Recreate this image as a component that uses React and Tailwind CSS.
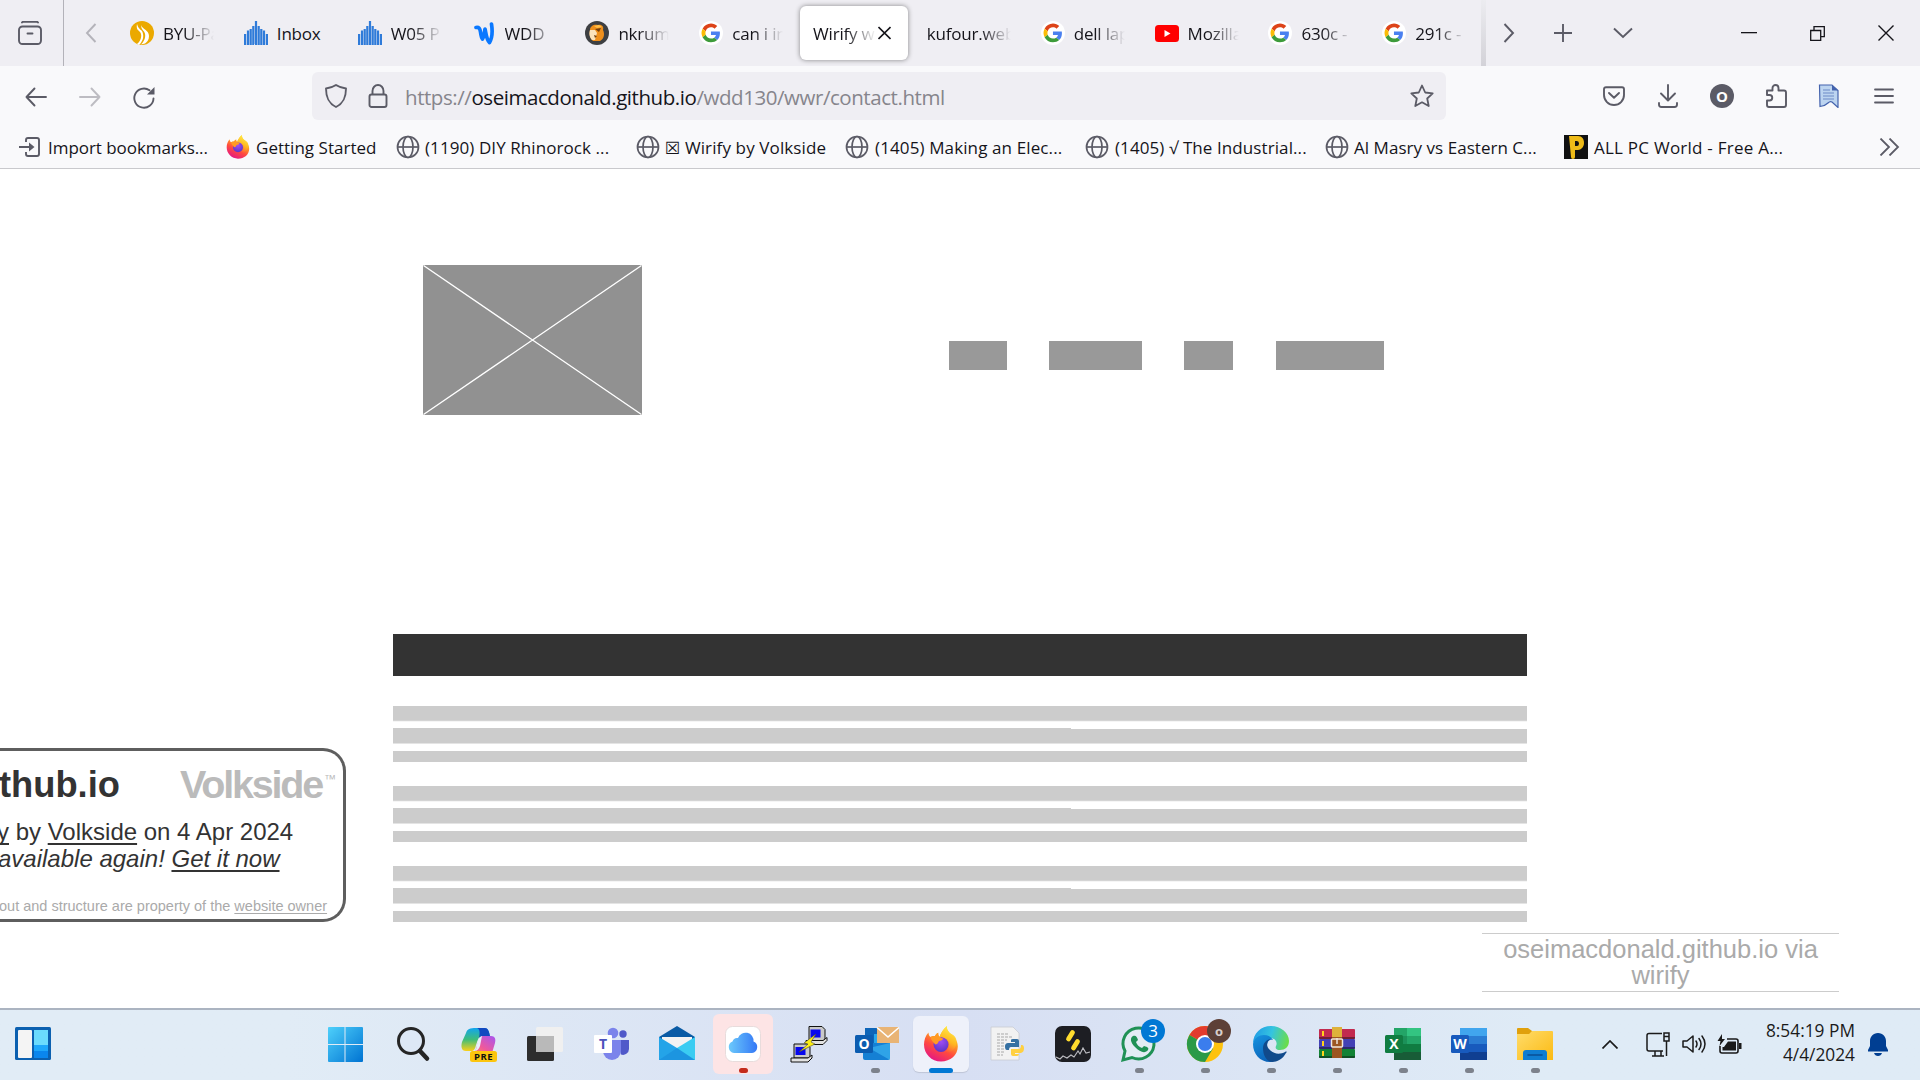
import React from "react";

const Google = () => (
  <svg width="24" height="24" viewBox="0 0 24 24">
    <circle cx="12" cy="12" r="12" fill="#fff" />
    <g transform="translate(2.6 2.6) scale(.39)">
      <path fill="#dd4318" d="M24 9.5c3.54 0 6.7 1.22 9.2 3.6l6.9-6.9C35.9 2.4 30.5 0 24 0 14.6 0 6.5 5.4 2.6 13.2l8 6.2C12.4 13.7 17.7 9.5 24 9.5z" />
      <path fill="#4a80f0" d="M47 24.6c0-1.6-.2-3.1-.4-4.6H24v9h12.9c-.6 3-2.2 5.500-4.700 7.200l7.700 6C44.400 38 47 32 47 24.600z" />
      <path fill="#fbbc05" d="M10.500 28.600a14.500 14.500 0 0 1 0-9.200l-8-6.200a24 24 0 0 0 0 21.600z" />
      <path fill="#3d9b3a" d="M24 48c6.500 0 11.900-2.100 15.900-5.800l-7.700-6c-2.200 1.500-4.900 2.300-8.200 2.300-6.300 0-11.600-4.200-13.500-9.900l-8 6.200C6.500 42.600 14.600 48 24 48z" />
    </g>
  </svg>
);
const Canvas = () => (
  <svg width="24" height="24" viewBox="0 0 24 24" fill="#2f7bd9">
    <path d="M0 13h2.200v11H0zM2.900 9.500h2.200V24H2.900zM5.600 8h2.200v16H5.600zM8.200 5h2.200v19H8.200zM10.900 0h2.200v24h-2.200zM13.600 5h2.200v19h-2.200zM16.200 8h2.200v16h-2.200zM18.900 9.500h2.200V24h-2.200zM21.800 13H24v11h-2.200z" />
  </svg>
);
const Byu = () => (
  <svg width="24" height="24" viewBox="0 0 24 24">
    <circle cx="12" cy="12" r="12" fill="#eba900" />
    <path d="M7 3c-1 5 1 6 3 8s2 8-3 12l2 1c5-5 5-10 3-14-2-2-4-3-5-7z" fill="#fff" />
    <path d="M11 4c1 4 8 5 8 11 0 4-2 6-4 7.500l-4 1c5-5 5-10 3-13-2-2-3-4-3-6.500z" fill="#fff" />
  </svg>
);
const Wave = () => (
  <svg width="20" height="24" viewBox="0 0 20 24" fill="none" stroke="#0a78ff" strokeLinecap="round" strokeLinejoin="round">
    <path d="M2 6.500c3-.5 4 1 4.500 4.500.4 3 .8 6 2 7 1.500-2 1.800-6 2.500-10 1 4 1.500 11 4.500 13.500 2.500-4 3-12 2-18.500" strokeWidth="3.700" />
  </svg>
);
const Lion = () => (
  <svg width="24" height="24" viewBox="0 0 24 24">
    <circle cx="12" cy="12" r="12" fill="#3d3f42" />
    <path d="M5 9c0-4 4-6 8-5 4-1 6 2 5 5 2 4 1 9-3 11H8c-3-2-4-7-3-11z" fill="#ee8f1c" />
    <path d="M5 9h5l2 3-2 7H7c-3-3-3-7-2-10z" fill="#fbe3bd" />
    <path d="M10 8l6-1-2 4zM9 14l3 1-2 2z" fill="#74400f" />
    <path d="M9 5l5-1 3 2-5 1z" fill="#ffc04a" />
  </svg>
);
const YouTube = () => (
  <svg width="24" height="24" viewBox="0 0 24 24">
    <rect y="4" width="24" height="17" rx="3.500" fill="#f00" />
    <path d="M9.500 9v7l6-3.500z" fill="#fff" />
  </svg>
);
const FirefoxLogo = ({ size, id }) => (
  <svg width={size} height={size} viewBox="0 0 36 36">
    <defs>
      <linearGradient id={id + "a"} x1=".8" y1="0" x2=".3" y2="1">
        <stop offset="0" stopColor="#fff44f" />
        <stop offset=".35" stopColor="#ffa91f" />
        <stop offset=".65" stopColor="#ff4a3f" />
        <stop offset="1" stopColor="#e31587" />
      </linearGradient>
      <radialGradient id={id + "b"} cx=".5" cy=".3" r=".7">
        <stop offset="0" stopColor="#a14df5" />
        <stop offset="1" stopColor="#5b35c6" />
      </radialGradient>
      <linearGradient id={id + "c"} x1=".8" y1="0" x2=".5" y2="1">
        <stop offset="0" stopColor="#fff44f" />
        <stop offset=".6" stopColor="#ffb91f" stopOpacity=".9" />
        <stop offset="1" stopColor="#ff7a30" stopOpacity="0" />
      </linearGradient>
    </defs>
    <path d="M5.500 6.500c0 2 .8 3.500 2 4.500 1.500-1 3-1.200 4.500-1 .7-1.500 1.800-2.600 3.300-3.200-.4 1.800.1 3.200 1.200 4.200 1.500-4 3.500-8 7.500-11-.5 4 2 6 4.500 8.500 3.500 3.300 6.300 6.500 6.300 12C34.800 29 27.500 35.500 18 35.500S1 28 1 18.500c0-4.500 1.500-9 4.500-12z" fill={`url(#${id}a)`} />
    <circle cx="18" cy="18.500" r="7.500" fill={`url(#${id}b)`} />
    <path d="M24 0c-4 3-6 7-7.500 11 4 0 8 1.500 9.500 5 1.500 5-1.500 9.500-6.500 10.500 6 2 14-2 14-11 0-3.500-2-6-5-7.500S23.500 4 24 0z" fill={`url(#${id}c)`} />
    <path d="M7.500 11c1.500-1 3-1.200 4.500-1 .7-1.500 1.800-2.600 3.300-3.200-.4 2 .6 4.500 4.700 5.700 0 1.500-2 2.500-4 2.500-1 1.500-1 3-3.500 3.500-1.500-1.500-4.500-4-5-7.500z" fill="#ff9a24" />
  </svg>
);

const tabs = [
  { icon: <Byu />, text: "BYU-Pa", fade: true },
  { icon: <Canvas />, text: "Inbox" },
  { icon: <Canvas />, text: "W05 P", fade: true },
  { icon: <Wave />, text: "WDD", fade: true },
  { icon: <Lion />, text: "nkrum", fade: true },
  { icon: <Google />, text: "can i in", fade: true },
  { active: true, text: "Wirify w" },
  { text: "kufour.web", fade: true },
  { icon: <Google />, text: "dell lap", fade: true },
  { icon: <YouTube />, text: "Mozilla", fade: true },
  { icon: <Google />, text: "630c -", fade: true },
  { icon: <Google />, text: "291c -", fade: true },
];

const fadeMask = "[mask-image:linear-gradient(to_left,transparent_0px,black_30px)]";

function Tab({ icon, text, active, fade }) {
  if (active)
    return (
      <div className="flex h-[66px] w-[114.2px] items-center pl-[2px]">
        <div className="flex h-[54px] w-[108px] items-center rounded-md bg-white pl-[13px] shadow-[0_0_5px_rgba(0,0,0,0.45)]">
          <span className={"w-[63px] overflow-hidden whitespace-nowrap pt-px text-[17px] tracking-[-0.2px] " + fadeMask}>{text}</span>
          <svg className="ml-[2px]" width="13" height="14" viewBox="0 0 13 14" fill="none" stroke="#15141a" strokeWidth="1.600">
            <path d="M.5 1l12 12M12.500 1l-12 12" />
          </svg>
        </div>
      </div>
    );
  return (
    <div className="flex h-[66px] w-[114.2px] items-center pl-[15px]">
      {icon && <div className="mr-[9px] flex w-6 shrink-0 justify-center">{icon}</div>}
      <span className={"overflow-hidden whitespace-nowrap pt-px text-[17px] tracking-[-0.2px] " + (icon ? "w-[51px] " : "w-[84px] ") + (fade ? fadeMask : "")}>{text}</span>
    </div>
  );
}

const Globe = () => (
  <svg width="24" height="24" viewBox="0 0 24 24" fill="none" stroke="#5b5b66" strokeWidth="1.700">
    <circle cx="12" cy="12" r="10.500" />
    <ellipse cx="12" cy="12" rx="5" ry="10.500" />
    <path d="M2 12h20" />
  </svg>
);
const ImportIcon = () => (
  <svg width="24" height="24" viewBox="0 0 24 24" fill="none" stroke="#5b5b66" strokeWidth="1.900">
    <path d="M7 7V5q0-2 2-2h9q2 0 2 2v14q0 2-2 2H9q-2 0-2-2v-2M0 12h13" />
    <path d="M10 7.500l5.500 4.500-5.500 4.500z" fill="#5b5b66" stroke="none" />
  </svg>
);
const PIcon = () => (
  <div className="flex h-6 w-6 items-center justify-center bg-[#111]">
    <svg width="18" height="24" viewBox="0 0 18 24">
      <path fillRule="evenodd" d="M2 1h9c4 0 6 3 6 7s-3 7-6 7H8v7q0 2-2 2t-2-2zM8 6v5h2q2 0 2-2.500T10 6z" fill="#eebb18" />
    </svg>
  </div>
);
const bookmarks = [
  { cell: "w-[207px]", icon: <ImportIcon />, text: "Import bookmarks...", sp: "-ml-px tracking-[-0.05px]" },
  { cell: "w-[170px]", icon: <FirefoxLogo size={24} id="bk" />, text: "Getting Started", sp: "tracking-[0.02px]" },
  { cell: "w-[240px]", icon: <Globe />, text: "(1190) DIY Rhinorock ...", sp: "-ml-px tracking-[0.08px]" },
  { cell: "w-[209px]", icon: <Globe />, text: "☒ Wirify by Volkside", sp: "-ml-px tracking-[0.12px]" },
  { cell: "w-[240px]", icon: <Globe />, text: "(1405) Making an Elec...", sp: "tracking-[0.12px]" },
  { cell: "w-[240px]", icon: <Globe />, text: "(1405) √ The Industrial...", sp: "tracking-[0.09px]" },
  { cell: "w-[239px]", icon: <Globe />, text: "Al Masry vs Eastern C...", sp: "-ml-px tracking-[0.04px]" },
  { cell: "w-[240px]", icon: <PIcon />, text: "ALL PC World - Free A...", sp: "tracking-[0.24px]" },
];

function Browser() {
  return (
    <header className="text-[#15141a]">
      <div className="flex h-[66px] items-center bg-[#efeef3]">
        <div className="flex h-full w-16 items-center justify-center border-r border-[#b3b2b9] pr-[4px]">
          <svg width="24" height="24" viewBox="0 0 24 24" fill="none" stroke="#5b5b66" strokeWidth="1.900" strokeLinecap="round">
            <path d="M4 1.500q.5-.8 1.500-.8h13q1 0 1.500.8M9.500 12.500h5" />
            <rect x="1" y="5.500" width="22" height="17.500" rx="3.500" />
          </svg>
        </div>
        <div className="flex w-[51px] justify-center pl-[3px]">
          <svg width="12" height="20" viewBox="0 0 12 20" fill="none" stroke="#b4b3ba" strokeWidth="1.900"><path d="M10.500 1L2 10l8.500 9" /></svg>
        </div>
        <div className="flex w-[1366px]">{tabs.map((t, i) => <Tab key={i} {...t} />)}</div>
        <div className="h-full w-[5px] bg-linear-to-b from-[#ececf0] to-[#d3d2d8]" />
        <div className="flex flex-1 items-center text-[#5b5b66]">
          <svg className="ml-[17px]" width="12" height="20" viewBox="0 0 12 20" fill="none" stroke="currentColor" strokeWidth="1.900"><path d="M1.500 1L10 10l-8.500 9" /></svg>
          <svg className="ml-[39px]" width="18" height="18" viewBox="0 0 18 18" fill="none" stroke="currentColor" strokeWidth="1.900"><path d="M9 0v18M0 9h18" /></svg>
          <svg className="ml-[41px]" width="20" height="12" viewBox="0 0 20 12" fill="none" stroke="currentColor" strokeWidth="1.900"><path d="M1 1.500l9 8.500 9-8.500" /></svg>
          <svg className="ml-[108px]" width="16" height="2" viewBox="0 0 16 2"><path d="M0 0h16v1.300H0z" fill="#15141a" /></svg>
          <svg className="ml-[53px]" width="15" height="15" viewBox="0 0 15 15" fill="none" stroke="#15141a" strokeWidth="1.300"><path d="M.7 4.500h10v10h-10zM4 4V.7h10.300v10h-3.500" /></svg>
          <svg className="ml-[53px]" width="16" height="16" viewBox="0 0 16 16" fill="none" stroke="#15141a" strokeWidth="1.400"><path d="M.5.5l15 15M15.500.5l-15 15" /></svg>
        </div>
      </div>
      <div className="flex h-[60px] items-center bg-[#f9f9fb] text-[#5b5b66]">
        <svg className="ml-[25px] mt-px" width="22" height="20" viewBox="0 0 22 20" fill="none" stroke="currentColor" strokeWidth="1.900" strokeLinecap="round" strokeLinejoin="round"><path d="M21 10H1.500M9.500 1.500L1.500 10l8 8.500" /></svg>
        <svg className="ml-[32px] mt-px text-[#bdbcc2]" width="22" height="20" viewBox="0 0 22 20" fill="none" stroke="currentColor" strokeWidth="1.900" strokeLinecap="round" strokeLinejoin="round"><path d="M1 10h19.500M12.500 1.500l8 8.500-8 8.500" /></svg>
        <svg className="ml-[32px] mt-[2px]" width="23" height="23" viewBox="0 0 23 23" fill="none" stroke="currentColor" strokeWidth="1.900" strokeLinecap="round">
          <path d="M20.500 12.500A9.600 9.600 0 1 1 16.500 4.300" />
          <path d="M21.500 1v7.500h-7.500z" fill="currentColor" stroke="none" />
        </svg>
        <div className="ml-[156px] flex h-12 w-[1134px] items-center rounded-md bg-[#efeef3]">
          <svg className="ml-[12px]" width="24" height="24" viewBox="0 0 24 24" fill="none" stroke="currentColor" strokeWidth="1.900" strokeLinejoin="round"><path d="M12 1c3 2 6 3 10 3.500C22 13 20 19 12 23 4 19 2 13 2 4.500 6 4 9 3 12 1z" /></svg>
          <svg className="ml-[20px]" width="20" height="24" viewBox="0 0 20 24" fill="none" stroke="currentColor" strokeWidth="1.900"><rect x="1.500" y="10.500" width="17" height="12.500" rx="2" /><path d="M4.500 10V7a5.500 6 0 0 1 11 0v3" /></svg>
          <span className="ml-[17px] w-[1000px] pt-[2px] text-[20.5px] tracking-[-0.44px] text-[#86858c]">https://<span className="text-[#15141a]">oseimacdonald.github.io</span>/wdd130/wwr/contact.html</span>
          <svg className="ml-auto mr-[12px] shrink-0" width="24" height="24" viewBox="0 0 24 24" fill="none" stroke="currentColor" strokeWidth="1.800" strokeLinejoin="round"><path d="M12 1.500l3.200 7 7.500.9-5.500 5.100 1.500 7.500L12 18.300 5.300 22l1.500-7.500-5.500-5.100 7.500-.9z" /></svg>
        </div>
        <div className="flex flex-1 items-center pl-[157px]">
          <svg width="22" height="20" viewBox="0 0 22 20" fill="none" stroke="currentColor" strokeWidth="1.900" strokeLinecap="round" strokeLinejoin="round"><path d="M3 1.200h16q2 0 2 2V9a10 10 0 0 1-20 0V3.200q0-2 2-2zM6 7l5 4.800L16 7" /></svg>
          <svg className="ml-[33px]" width="20" height="24" viewBox="0 0 20 24" fill="none" stroke="currentColor" strokeWidth="1.900" strokeLinecap="round" strokeLinejoin="round"><path d="M10 1v15M3 9.500l7 7 7-7M1 19v1.500Q1 23 3.500 23h13q2.500 0 2.500-2.500V19" /></svg>
          <div className="ml-[32px] flex h-6 w-6 items-center justify-center rounded-full bg-[#5b5b66] text-[15px] font-bold text-white">O</div>
          <svg className="ml-[31px]" width="22" height="24" viewBox="0 0 22 24" fill="none" stroke="currentColor" strokeWidth="1.900" strokeLinejoin="round"><path d="M7.500 6.500V4a3 3 0 0 1 6 0v2.500H19q2 0 2 2V21q0 2-2 2H4q-2 0-2-2v-4.500h2.500a2.700 2.700 0 0 0 0-5.500H2V6.500z" /></svg>
          <svg className="ml-[31px]" width="22" height="24" viewBox="0 0 22 24"><path d="M1.500 1H14l6 5.500v17L14 18q-2-1-4 1-3 3-8 3.500z" fill="#bcd4f0" stroke="#4463ad" strokeWidth="1.200" /><path d="M5 6h7M5 9h11M5 12h11M5 15h11" stroke="#6d8ac6" strokeWidth="1.100" /><path d="M14 1v5.500h6z" fill="#4463ad" /></svg>
          <svg className="ml-[34px]" width="20" height="16" viewBox="0 0 20 16" fill="none" stroke="currentColor" strokeWidth="1.800" strokeLinecap="round"><path d="M1 1.500h18M1 8h18M1 14.500h18" /></svg>
        </div>
      </div>
      <div className="flex h-[43px] items-center border-b border-[#c9c9cd] bg-[#f9f9fb] pl-[19px] text-[17px]">
        {bookmarks.map((b, i) => (
          <div key={i} className={"flex shrink-0 items-center gap-[6px] whitespace-nowrap " + b.cell}>
            <div className="h-6 w-6 shrink-0">{b.icon}</div>
            <span className={"pt-[2px] " + b.sp}>{b.text}</span>
          </div>
        ))}
        <svg className="ml-auto mr-[20px]" width="21" height="18" viewBox="0 0 21 18" fill="none" stroke="#5b5b66" strokeWidth="1.800"><path d="M1.500.5L10 9l-8.500 8.500M10.500.5L19 9l-8.500 8.500" /></svg>
      </div>
    </header>
  );
}

function Paragraph() {
  return (
    <div className="flex h-20 flex-col">
      <div className="h-[14px] bg-[#ccc]" />
      <div className="h-px bg-[#d4d4d4]" />
      <div className="h-px bg-[#f5f5f5]" />
      <div className="mt-[6px] flex h-[15px] items-end">
        <div className="h-[15px] w-[678px] bg-[#ccc]" />
        <div className="h-[14px] flex-1 bg-[#ccc]" />
      </div>
      <div className="h-px bg-[#e4e4e4]" />
      <div className="mt-[7px] h-[11px] bg-[#ccc]" />
    </div>
  );
}

function Page() {
  return (
    <main className="relative h-[839px] overflow-hidden bg-white">
      <div className="mx-auto w-[1134px] pt-24">
        <div className="flex h-[150px] pl-[30px]">
          <svg width="219" height="150" viewBox="0 0 219 150"><rect width="219" height="150" fill="#919191" /><path d="M.5.5l218 149M218.500.5L.5 149.500" stroke="#fff" strokeWidth="1.300" /></svg>
          <nav className="ml-[307px] mt-[76px] flex h-[29px]">
            <div className="w-[58px] bg-[#999]" />
            <div className="ml-[42px] w-[93px] bg-[#999]" />
            <div className="ml-[42px] w-[49px] bg-[#999]" />
            <div className="ml-[43px] w-[108px] bg-[#999]" />
          </nav>
        </div>
        <div className="mt-[219px] h-[42px] bg-[#333]" />
        <div className="mt-[30px]">
          <Paragraph />
          <Paragraph />
          <Paragraph />
        </div>
      </div>

      <aside className="absolute left-0 top-[579px] h-[174px] w-[346px] rounded-r-[23px] border-y-[3px] border-r-[3px] border-[#5e5e5e] bg-white font-['Liberation_Sans',sans-serif] text-[#333]">
        <div className="flex h-[67px] items-start justify-between pr-[7px] pt-[12px]">
          <span className="-ml-px text-[36.3px] font-bold leading-[44px]">thub.io</span>
          <div className="flex items-start text-[#bbb]">
            <span className="text-[39.5px] font-bold leading-[42px] tracking-[-2.2px]">Volkside</span>
            <span className="mt-[10px] ml-[2px] text-[12px] leading-[12px]">™</span>
          </div>
        </div>
        <div className="whitespace-nowrap text-[24px] leading-[27px]">
          <p className="-ml-[3px]"><span className="underline decoration-2 underline-offset-[3px] [text-decoration-skip-ink:none]">y</span> by <span className="underline decoration-2 underline-offset-[3px] [text-decoration-skip-ink:none]">Volkside</span> on 4 Apr 2024</p>
          <p className="-ml-[2px] italic">available again! <span className="underline decoration-2 underline-offset-[3px] [text-decoration-skip-ink:none]">Get it now</span></p>
        </div>
        <p className="mt-[24px] -ml-px whitespace-nowrap text-[14.5px] leading-[20px] text-[#aaa]">out and structure are property of the <span className="underline decoration-1 underline-offset-[2px] [text-decoration-skip-ink:none]">website owner</span></p>
      </aside>

      <aside className="absolute left-[1482px] top-[764px] h-[59px] w-[357px] border-y border-[#ccc] bg-white pt-[2px] text-center font-['Liberation_Sans',sans-serif] text-[25.5px] leading-[26px] text-[#aaa]">
        oseimacdonald.github.io via
        <br />
        wirify
      </aside>
    </main>
  );
}

const Office = ({ letter, c, sq }) => (
  <svg width="36" height="36" viewBox="0 0 36 36" className="overflow-visible">
    <rect x="9" y="2" width="27" height="8" fill={c[0]} />
    <rect x="9" y="10" width="27" height="8" fill={c[1]} />
    <rect x="9" y="18" width="27" height="8" fill={c[2]} />
    <rect x="9" y="26" width="27" height="8" fill={c[3]} />
    {c[4] && <path d="M22 2h14v8H22z" fill={c[4]} />}
    {c[4] && <path d="M22 10h14v8H22z" fill={c[0]} />}
    <rect y="9" width="18" height="18" rx="1.500" fill={sq} />
    <text x="9" y="23" textAnchor="middle" fontSize="14" fontWeight="700" fill="#fff">{letter}</text>
  </svg>
);

const S = ({ children }) => <svg width="36" height="36" viewBox="0 0 36 36" className="overflow-visible">{children}</svg>;
const Computer = () => (
  <>
    <path d="M3 0h13l3 3v11H3z" fill="#c9c9c9" stroke="#111" />
    <rect x="4.500" y="3" width="10" height="8" fill="#0707ee" />
    <path d="M0 14h17l4-3v3l-4 4H0z" fill="#e2e2e2" stroke="#111" />
  </>
);

const apps = [
  {
    icon: (
      <S>
        <defs><linearGradient id="win" x1="0" y1="0" x2="1" y2="1"><stop offset="0" stopColor="#4ed0fb" /><stop offset="1" stopColor="#0073d2" /></linearGradient></defs>
        <path transform="translate(-2 0)" d="M2 1h15.500v17H1V2q0-1 1-1zM18.500 1H35q1 0 1 1v16H18.500zM1 19h16.500v17H2q-1 0-1-1zM18.500 19H36v16q0 1-1 1H18.500z" fill="url(#win)" />
      </S>
    ),
  },
  { icon: <S><circle cx="16" cy="15" r="12.500" fill="#dde8f6" stroke="#252525" strokeWidth="3" /><path d="M25 25l7 7.500" stroke="#252525" strokeWidth="4.500" strokeLinecap="round" /></S> },
  {
    icon: (
      <S>
        <defs>
          <linearGradient id="cpa" x1="0" y1="0" x2="0" y2="1"><stop offset="0" stopColor="#12a5ef" /><stop offset=".5" stopColor="#3ebd7a" /><stop offset="1" stopColor="#fbd018" /></linearGradient>
          <linearGradient id="cpb" x1="1" y1="0" x2="0" y2="1"><stop offset="0" stopColor="#a555f2" /><stop offset=".6" stopColor="#f0599a" /><stop offset="1" stopColor="#ff9a4d" /></linearGradient>
        </defs>
        <path d="M15 2h8c4 0 5 3 6 8h-7c-5 0-5 4-7 9-1 4-2 6-5 6H5c-5 0-5-5-4-9L5 7c1-4 4-5 10-5z" fill="url(#cpa)" />
        <path d="M16 2h8c3 0 4 3 5 8h-7c-2 0-3 1-4 2 1-5 1-9-2-10z" fill="#1149c0" />
        <path d="M22 10h8c4 0 5 3 4 7l-3 10H9c5 0 6-3 7-7 2-6 2-10 6-10z" fill="url(#cpb)" />
        <path d="M21 10q-4 1-5 9t-4 6q5 1 7-5z" fill="#e9effb" />
        <rect x="9" y="25" width="27" height="11" rx="2.500" fill="#fcc50e" />
        <text x="22.500" y="33.800" textAnchor="middle" fontSize="9.500" fontWeight="700" letterSpacing=".4" fill="#111">PRE</text>
      </S>
    ),
  },
  { icon: <S><rect x="0" y="10" width="27" height="25" rx="1.500" fill="#2d2d2d" /><rect x="9" y="1" width="27" height="25" rx="1.500" fill="#f0f0f0" /><path d="M9 10h18v16H9z" fill="#b9b9b9" /></S> },
  {
    icon: (
      <S>
        <circle cx="30" cy="8" r="3.700" fill="#5059c9" />
        <path d="M25 14h11v9a6 6 0 0 1-8 5.500z" fill="#5059c9" />
        <circle cx="20" cy="7" r="5.300" fill="#7b83eb" />
        <path d="M10 14h18v11a9 9 0 0 1-18 0z" fill="#7b83eb" />
        <rect x="1" y="9" width="18" height="18" rx="1" fill="#fff" />
        <text x="10" y="23" textAnchor="middle" fontSize="14" fontWeight="700" fill="#4b53bc">T</text>
      </S>
    ),
  },
  {
    icon: (
      <S>
        <path d="M0 11L18 0l18 11v6H0z" fill="#0a5ba5" />
        <path d="M3 11h30v4L18 26 3 15z" fill="#f3f3f3" />
        <path d="M0 11l18 11v12H0z" fill="#24a4e8" />
        <path d="M36 11L18 22v12h18z" fill="#3accf2" />
        <path d="M0 34l18-12 18 12z" fill="#1c95e0" />
      </S>
    ),
  },
  {
    box: "bg-[#fde4e5]", dot: "w-[9px] bg-[#c42b1c]",
    icon: (
      <S>
        <defs><linearGradient id="cl" x1="0" x2="1"><stop offset="0" stopColor="#6bc9fb" /><stop offset="1" stopColor="#3478f6" /></linearGradient></defs>
        <rect x=".5" y=".5" width="35" height="35" rx="7" fill="#fff" stroke="#e8dcdc" />
        <path d="M9 27a6 6 0 0 1-1.500-11.500A5 5 0 0 1 13 12a8 8 0 0 1 15.500 3.500A6 6 0 0 1 27 27z" fill="url(#cl)" />
      </S>
    ),
  },
  {
    icon: (
      <S>
        <g transform="translate(15 .5)"><Computer /></g>
        <g transform="translate(0 18)"><Computer /></g>
        <path d="M25 8L13 17l4 1-9 8 16-8-4-2z" fill="#fdee12" stroke="#444" strokeWidth=".6" />
      </S>
    ),
  },
  {
    dot: "w-[9px] bg-[#7d828c]",
    icon: (
      <S>
        <path d="M8 2h22v16H8z" fill="#0e65b8" /><path d="M17 8h9v9h-9z" fill="#29a8ea" />
        <path d="M6 17h27v15q0 2-2 2H8q-2 0-2-2z" fill="#1580d4" /><path d="M33 17v17L12 22z" fill="#3ab2ef" opacity=".7" />
        <rect x="-2" y="9" width="18" height="18" rx="1.500" fill="#0b5cb0" />
        <text x="7" y="23" textAnchor="middle" fontSize="14" fontWeight="700" fill="#fff">O</text>
        <path d="M20 1h22v16H20z" fill="#e9b475" /><path d="M20 1.500l11 9.500 11-9.500" fill="none" stroke="#fff" strokeWidth="1.600" />
      </S>
    ),
  },
  { box: "bg-[#eef1fa] shadow-[0_1px_1px_rgba(0,0,0,0.12)] !w-14 !h-14", dot: "w-[24px] bg-[#0078d4]", icon: <FirefoxLogo size={36} id="tb" /> },
  {
    icon: (
      <S>
        <path d="M2 1h22l6 6v27H2z" fill="#f2f2f2" stroke="#c9ccd2" strokeWidth=".8" />
        <path d="M8 8h12M8 11h16M8 14h10M8 17h8M8 20h9M8 23h7M8 26h8M8 29h6" stroke="#a9a9a9" strokeDasharray="3 1" />
        <path d="M24 13h4q2 0 2 2v6h-8q-2 0-2 3h-2q-2 0-2-3.500T19 17h7v-1h-4v-2q0-1 2-1z" fill="#3570a2" />
        <path d="M28 30h-4q-2 0-2-2v-5h8q2 0 2-4h1q2 0 2 3.500T32 27h-6v1h4q0 2-2 2z" fill="#ffd040" />
      </S>
    ),
  },
  {
    icon: (
      <S>
        <rect width="36" height="36" rx="7" fill="#1d1e23" />
        <path d="M17.500 6.500L13.500 13M22.500 15.500l-4 6.500" stroke="#ffdc2e" strokeWidth="4.800" strokeLinecap="round" />
        <path d="M1 31l4 2 3-3 4 2 4-3 3 2 4-6 2 3 3-6 3 5 4-1" fill="none" stroke="#bdbdc2" strokeWidth="1.100" />
      </S>
    ),
  },
  {
    dot: "w-[9px] bg-[#7d828c]",
    icon: (
      <S>
        <path d="M2 34l2-9a15.500 15.500 0 1 1 7 6.500z" fill="#e2ecf4" stroke="#1f9155" strokeWidth="3" />
        <path d="M12 10c-3 2-3 6 2 11s10 7 13 3c1-2 0-3-4-4l-2 2c-3-1-5-3-6-6l2-2c-1-3-2-5-5-4z" fill="#1f9155" />
        <circle cx="32" cy="5" r="12" fill="#0078d4" />
        <text x="32" y="11" textAnchor="middle" fontSize="17" fill="#fff">3</text>
      </S>
    ),
  },
  {
    dot: "w-[9px] bg-[#7d828c]",
    icon: (
      <S>
        <circle cx="18" cy="18" r="18" fill="#fdc20e" />
        <path d="M18 18L2.400 9A18 18 0 0 1 33.600 9z" fill="#e33b2e" />
        <path d="M18 36A18 18 0 0 1 2.400 9L18 18l8 4.500z" fill="#2b9a48" />
        <circle cx="18" cy="18" r="9" fill="#fff" /><circle cx="18" cy="18" r="7" fill="#3b7ded" />
        <circle cx="32" cy="5" r="12" fill="#5d4037" />
        <text x="32" y="9.500" textAnchor="middle" fontSize="13" fontWeight="700" fill="#d8cfcb">o</text>
      </S>
    ),
  },
  {
    dot: "w-[9px] bg-[#7d828c]",
    icon: (
      <S>
        <defs>
          <linearGradient id="eg" x1="0" y1=".3" x2="1" y2=".5"><stop offset="0" stopColor="#1f9be5" /><stop offset=".5" stopColor="#35c4e0" /><stop offset="1" stopColor="#6add4a" /></linearGradient>
          <linearGradient id="eb" x1="0" y1="0" x2=".5" y2="1"><stop offset="0" stopColor="#1794e0" /><stop offset="1" stopColor="#0b62b8" /></linearGradient>
        </defs>
        <path d="M0 18C0 7 8 0 18 0s18 7 18 15c0 6-4 9-9 9-4 0-5-2-4-4 2-4-1-8-6-8C9 9 2 12 0 18z" fill="url(#eg)" />
        <path d="M0 18c1-6 6-9 11-9 5 0 8 3 9 5-4-1-6 2-6 6 0 6 5 12 12 12-3 3-7 4-9 4C7 36 0 28 0 18z" fill="url(#eb)" />
        <path d="M10 22c0-5 4-9 8-9-5 2-5 8-1 11 5 5 11 4 15 2 2-1 2 0 1 1-3 6-9 9-14 9-6-1-9-7-9-14z" fill="#114a8b" />
      </S>
    ),
  },
  {
    dot: "w-[9px] bg-[#7d828c]",
    icon: (
      <S>
        <rect y="3" width="36" height="10" rx="1" fill="#c22a4f" /><rect y="13" width="36" height="10" rx="1" fill="#4341b5" /><rect y="23" width="36" height="9" rx="1" fill="#128235" />
        <path d="M0 11h36v2H0zM0 21h36v2H0zM0 30h36v2H0z" fill="#111" opacity=".45" />
        <path d="M3 5h2v5H3zM3 15h2v5H3zM3 25h2v5H3z" fill="#ffd21c" />
        <rect x="13" y="1" width="10" height="10" fill="#deb23a" /><rect x="13" y="11" width="10" height="21" fill="#9c5620" />
        <rect x="12.500" y="13" width="11" height="8" rx="1" fill="none" stroke="#efe6da" strokeWidth="1.500" /><path d="M18 12v6" stroke="#efe6da" strokeWidth="1.500" />
      </S>
    ),
  },
  { dot: "w-[9px] bg-[#7d828c]", icon: <Office letter="X" c={["#23a567", "#1c9159", "#107c41", "#185c37", "#33c481"]} sq="#107c41" /> },
  { dot: "w-[9px] bg-[#7d828c]", icon: <Office letter="W" c={["#41a5ee", "#2b7cd3", "#185abd", "#103f91"]} sq="#185abd" /> },
  {
    dot: "w-[9px] bg-[#7d828c]",
    icon: (
      <S>
        <defs><linearGradient id="fo" x1="0" y1="0" x2="1" y2="1"><stop offset="0" stopColor="#ffdc6b" /><stop offset="1" stopColor="#fbba12" /></linearGradient></defs>
        <path d="M0 3q0-1 1-1h10l4 3v5H0z" fill="#e0a00c" />
        <path d="M0 8h12l3-3h20q1 0 1 1v28H0z" fill="url(#fo)" />
        <path d="M6 34v-7q0-3 3-3h18q3 0 3 3v7z" fill="#0f7dd1" /><path d="M11 29h14" stroke="#0a4f95" strokeWidth="1.600" strokeLinecap="round" />
      </S>
    ),
  },
];

function Taskbar() {
  return (
    <footer className="flex h-[72px] border-t-2 border-[#abb4c1] bg-linear-to-r from-[#e1ecf6] from-15% via-[#d7dff3] via-50% to-[#dfebf6] to-80% text-[#1a1a1a]">
      <div className="w-[314px] pl-[15px] pt-[17px]">
        <svg width="36" height="33" viewBox="0 0 36 33">
          <rect width="36" height="33" rx="1.500" fill="#0b60b0" />
          <rect x="3" y="3" width="14" height="28" rx="1" fill="#f4f4f4" />
          <path d="M19 3h14v15H19z" fill="#6bdbfd" /><path d="M19 18h14v6H19z" fill="#1ea7fb" /><path d="M19 24h14v7H19z" fill="#0a86ee" />
        </svg>
      </div>
      <div className="flex">
        {apps.map((a, i) => (
          <div key={i} className="relative flex w-[66px] items-center justify-center pb-[2px]">
            <div className={"flex h-[60px] w-[60px] items-center justify-center rounded-md " + (a.box || "")}>{a.icon}</div>
            {a.dot && <div className={"absolute bottom-[7px] h-[5px] rounded-full " + a.dot} />}
          </div>
        ))}
      </div>
      <div className="flex flex-1 items-center pl-[34px] pb-[2px]">
        <svg width="16" height="9" viewBox="0 0 16 9" fill="none" stroke="currentColor" strokeWidth="1.700"><path d="M.5 8.500L8 1l7.500 7.500" /></svg>
        <svg className="ml-[28px]" width="25" height="25" viewBox="0 0 25 25" fill="none" stroke="currentColor" strokeWidth="1.500"><path d="M16 1.500H3q-2 0-2 2V17q0 2 2 2h14M6 24h12M9 19v5M15 19v5M18 1h5v8h-5zM18 4.500h5M20.500 9v15" /></svg>
        <svg className="ml-[11px]" width="25" height="20" viewBox="0 0 25 20" fill="none" stroke="currentColor" strokeWidth="1.500" strokeLinecap="round" strokeLinejoin="round"><path d="M1 7v6h4l6 5V2L5 7zM14 7q2 3 0 6M17 4.500q4 5.500 0 11M20 2q6 8 0 16" /></svg>
        <svg className="ml-[10px]" width="25" height="21" viewBox="0 0 25 21"><path d="M10 5h9q2 0 2 2v10q0 2-2 2H5q-2 0-2-2v-5" fill="none" stroke="currentColor" strokeWidth="1.600" /><path d="M11 7.500h8v9H5.500V13H7zM22 9h2.500v6H22zM5 0L.5 7h3L2.500 12 8 5H5z" fill="currentColor" /></svg>
        <div className="-mt-[2px] w-[113px] whitespace-nowrap text-right text-[17.3px] leading-[24.5px] tracking-[0.02px]">
          <div>8:54:19 PM</div>
          <div>4/4/2024</div>
        </div>
        <svg className="ml-[13px]" width="20" height="23" viewBox="0 0 20 23" fill="#003e92"><path d="M10 0c5 0 8 4 8 8v5l2 4v1.500H0V17l2-4V8c0-4 3-8 8-8zM6 20h8q-1 3-4 3t-4-3z" /></svg>
      </div>
    </footer>
  );
}

export default function App() {
  return (
    <div className="h-[1080px] w-[1920px] overflow-hidden bg-white font-['Open_Sans','Noto_Sans','DejaVu_Sans',sans-serif]">
      <Browser />
      <Page />
      <Taskbar />
    </div>
  );
}
